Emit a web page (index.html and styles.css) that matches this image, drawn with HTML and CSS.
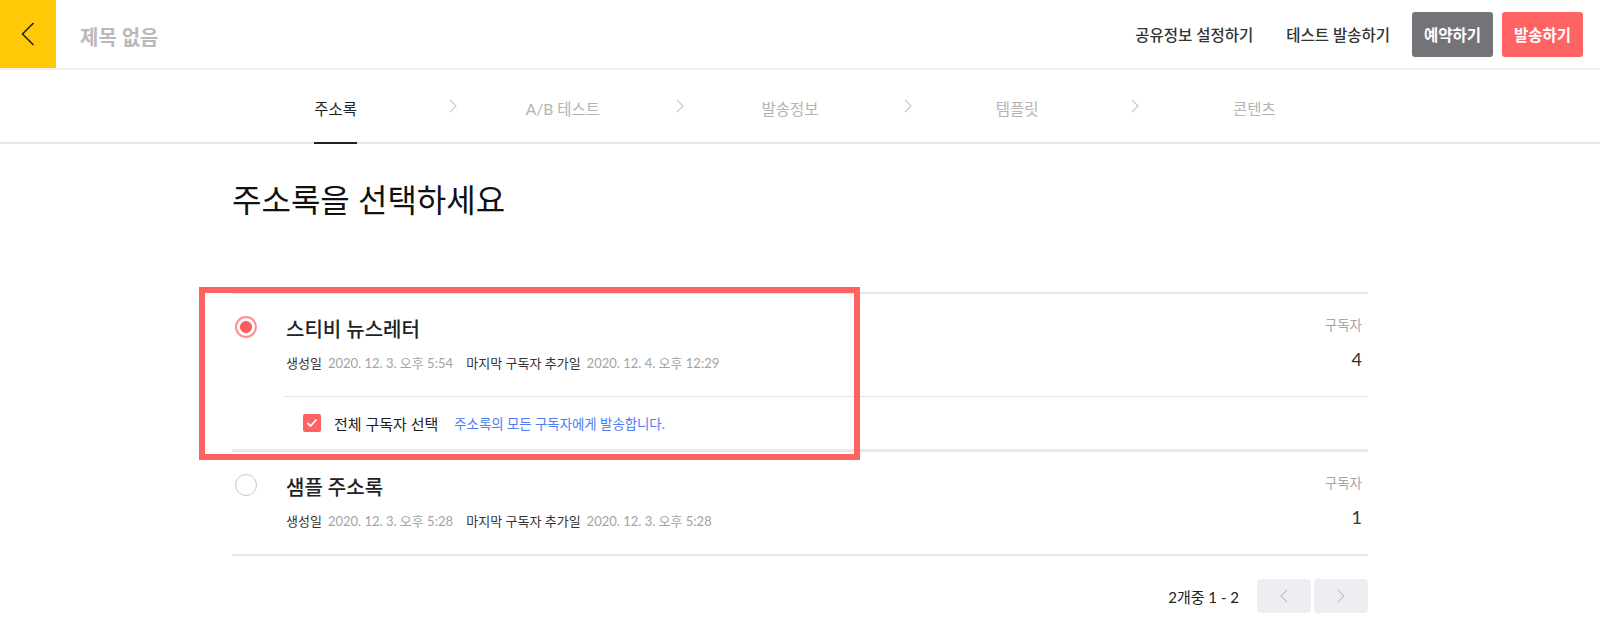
FILE: index.html
```html
<!DOCTYPE html>
<html lang="ko">
<head>
    <meta charset="UTF-8">
    <meta name="viewport" content="width=device-width, initial-scale=1.0">
    <title>스티비 - 주소록 선택</title>
    <link rel="stylesheet" href="styles.css">
</head>
<body>
    <header class="topbar">
        <a class="back-btn" href="#">
            <svg width="14" height="24" viewBox="0 0 14 24"><polyline points="12.5,1 1.5,12 12.5,23" fill="none" stroke="#222" stroke-width="1.6"/></svg>
        </a>
        <div class="doc-title">제목 없음</div>
        <nav class="top-actions">
            <a class="text-link" href="#">공유정보 설정하기</a>
            <a class="text-link" href="#">테스트 발송하기</a>
            <button class="btn btn-gray">예약하기</button>
            <button class="btn btn-red">발송하기</button>
        </nav>
    </header>

    <div class="steps">
        <ol class="step-list">
            <li class="step active">
                <div class="step-label"><span>주소록</span></div>
                <svg class="step-arrow" width="8" height="14" viewBox="0 0 8 14"><polyline points="1,1 7,7 1,13" fill="none" stroke="#c9c9c9" stroke-width="1.2"/></svg>
            </li>
            <li class="step">
                <div class="step-label"><span>A/B 테스트</span></div>
                <svg class="step-arrow" width="8" height="14" viewBox="0 0 8 14"><polyline points="1,1 7,7 1,13" fill="none" stroke="#c9c9c9" stroke-width="1.2"/></svg>
            </li>
            <li class="step">
                <div class="step-label"><span>발송정보</span></div>
                <svg class="step-arrow" width="8" height="14" viewBox="0 0 8 14"><polyline points="1,1 7,7 1,13" fill="none" stroke="#c9c9c9" stroke-width="1.2"/></svg>
            </li>
            <li class="step">
                <div class="step-label"><span>템플릿</span></div>
                <svg class="step-arrow" width="8" height="14" viewBox="0 0 8 14"><polyline points="1,1 7,7 1,13" fill="none" stroke="#c9c9c9" stroke-width="1.2"/></svg>
            </li>
            <li class="step last">
                <div class="step-label"><span>콘텐츠</span></div>
            </li>
        </ol>
    </div>

    <main class="container">
        <h1 class="page-title">주소록을 선택하세요</h1>

        <div class="ab-list">
            <!-- selected -->
            <div class="ab-item">
                <div class="ab-main">
                    <div class="radio-col"><span class="radio checked"></span></div>
                    <div class="ab-info">
                        <div class="ab-name">스티비 뉴스레터</div>
                        <div class="ab-meta">
                            <span class="meta-label">생성일</span><span class="meta-value">2020. 12. 3. 오후 5:54</span>
                            <span class="meta-label">마지막 구독자 추가일</span><span class="meta-value">2020. 12. 4. 오후 12:29</span>
                        </div>
                    </div>
                    <div class="ab-count">
                        <div class="count-label">구독자</div>
                        <div class="count-value">4</div>
                    </div>
                </div>
                <div class="ab-sub">
                    <span class="checkbox checked">
                        <svg width="12" height="10" viewBox="0 0 12 10"><polyline points="1.5,5 4.5,8 10.5,1.5" fill="none" stroke="#fff" stroke-width="1.8"/></svg>
                    </span>
                    <span class="sub-label">전체 구독자 선택</span>
                    <span class="sub-hint">주소록의 모든 구독자에게 발송합니다.</span>
                </div>
            </div>

            <div class="ab-item">
                <div class="ab-main">
                    <div class="radio-col"><span class="radio"></span></div>
                    <div class="ab-info">
                        <div class="ab-name">샘플 주소록</div>
                        <div class="ab-meta">
                            <span class="meta-label">생성일</span><span class="meta-value">2020. 12. 3. 오후 5:28</span>
                            <span class="meta-label">마지막 구독자 추가일</span><span class="meta-value">2020. 12. 3. 오후 5:28</span>
                        </div>
                    </div>
                    <div class="ab-count">
                        <div class="count-label">구독자</div>
                        <div class="count-value">1</div>
                    </div>
                </div>
            </div>

            <div class="highlight"></div>
        </div>

        <div class="pager">
            <span class="pager-info">2개중 1 - 2</span>
            <button class="pager-btn">
                <svg width="8" height="14" viewBox="0 0 8 14"><polyline points="7,1 1,7 7,13" fill="none" stroke="#c2c4c8" stroke-width="1.2"/></svg>
            </button>
            <button class="pager-btn">
                <svg width="8" height="14" viewBox="0 0 8 14"><polyline points="1,1 7,7 1,13" fill="none" stroke="#c2c4c8" stroke-width="1.2"/></svg>
            </button>
        </div>
    </main>
</body>
</html>
```

FILE: styles.css
```css
body {
    margin: 0;
    font-family: Lato, "Noto Sans CJK KR", sans-serif;
    color: #333;
    background-color: #fff;
}
a {
    text-decoration: none;
    color: inherit;
}
button {
    font-family: inherit;
    border: none;
    cursor: pointer;
}

/* top bar */
.topbar {
    display: flex;
    align-items: center;
    height: 68px;
    border-bottom: 2px solid #f1f1f1;
}
.back-btn {
    display: flex;
    align-items: center;
    justify-content: center;
    width: 56px;
    height: 68px;
    background-color: #ffc907;
}
.doc-title {
    margin-left: 24px;
    margin-top: 4px;
    font-size: 20px;
    font-weight: 700;
    color: #b9b9b9;
}
.top-actions {
    margin-left: auto;
    display: flex;
    align-items: center;
    padding-right: 17px;
}
.text-link {
    font-size: 15.5px;
    font-weight: 500;
    color: #333;
    margin-right: 33px;
}
.text-link:nth-child(2) {
    margin-right: 22px;
}
.btn {
    width: 81px;
    height: 45px;
    border-radius: 3px;
    color: #fff;
    font-size: 15.5px;
    font-weight: 700;
}
.btn-gray {
    background-color: #737478;
    margin-right: 9px;
}
.btn-red {
    background-color: #ff6464;
}

/* steps */
.steps {
    border-bottom: 2px solid #e8e8e8;
}
.step-list {
    list-style: none;
    margin: 0 auto;
    padding: 0;
    width: 1136px;
    display: grid;
    grid-template-columns: repeat(5, 1fr);
    height: 72px;
}
.step {
    display: flex;
    align-items: center;
}
.step-label {
    flex: 1;
    align-self: stretch;
    display: flex;
    justify-content: center;
}
.step-label span {
    display: flex;
    align-items: center;
    padding-top: 4px;
    font-size: 15.5px;
    color: #b4b4b4;
    border-bottom: 2px solid transparent;
    margin-bottom: -2px;
}
.step.active .step-label span {
    color: #222;
    border-bottom-color: #222;
}
.step-arrow {
    margin-left: 10px;
    margin-right: 2px;
}

/* content */
.container {
    width: 1136px;
    margin: 0 auto;
}
.page-title {
    margin: 34px 0 70px;
    font-size: 32px;
    font-weight: 400;
    line-height: 44px;
    color: #111;
}
.ab-list {
    position: relative;
    border-top: 2px solid #e6e6e6;
}
.ab-item {
    border-bottom: 2px solid #e9e9ea;
}
.ab-item:first-child {
    border-bottom-width: 3px;
}
.ab-main {
    display: flex;
    padding: 22px 6px 23px 0;
}
.radio-col {
    width: 54px;
}
.radio {
    display: block;
    box-sizing: border-box;
    width: 22px;
    height: 22px;
    margin: 0 0 0 3px;
    border: 1.5px solid #c8c8c8;
    border-radius: 50%;
}
.radio.checked {
    border: 2px solid #ff8d8d;
    background: radial-gradient(circle, #ff5c5c 0, #ff5c5c 5.5px, #fff 6.5px);
}
.ab-info {
    flex: 1;
}
.ab-name {
    font-size: 20px;
    font-weight: 500;
    line-height: 26px;
    color: #222;
}
.ab-meta {
    margin-top: 11px;
    font-size: 13px;
    line-height: 20px;
}
.meta-label {
    color: #333;
    margin-right: 6px;
}
.meta-value {
    color: #a3a3a3;
    margin-right: 10px;
}
.ab-count {
    text-align: right;
}
.count-label {
    font-size: 13.5px;
    line-height: 18px;
    color: #a6a6a6;
}
.count-value {
    margin-top: 13px;
    font-size: 18px;
    line-height: 24px;
    color: #333;
}
.ab-sub {
    margin-left: 52px;
    border-top: 1px solid #e3e3e6;
    height: 52px;
    display: flex;
    align-items: center;
    padding-left: 19px;
}
.checkbox {
    display: flex;
    align-items: center;
    justify-content: center;
    width: 18px;
    height: 18px;
    border-radius: 2px;
    background-color: #ff6262;
    margin-right: 13px;
}
.sub-label {
    font-size: 15px;
    color: #222;
}
.sub-hint {
    margin-left: 16px;
    font-size: 13.4px;
    color: #4d7cf4;
}
.highlight {
    position: absolute;
    left: -33px;
    top: -7px;
    width: 661px;
    height: 173px;
    box-sizing: border-box;
    border: 6px solid #ff6262;
    pointer-events: none;
}

/* pagination */
.pager {
    display: flex;
    justify-content: flex-end;
    align-items: center;
    margin-top: 23px;
}
.pager-info {
    font-size: 15px;
    color: #222;
    margin-right: 15px;
}
.pager-btn {
    display: flex;
    align-items: center;
    justify-content: center;
    width: 54px;
    height: 34px;
    border-radius: 4px;
    background-color: #edeef2;
    margin-left: 3px;
}
```
